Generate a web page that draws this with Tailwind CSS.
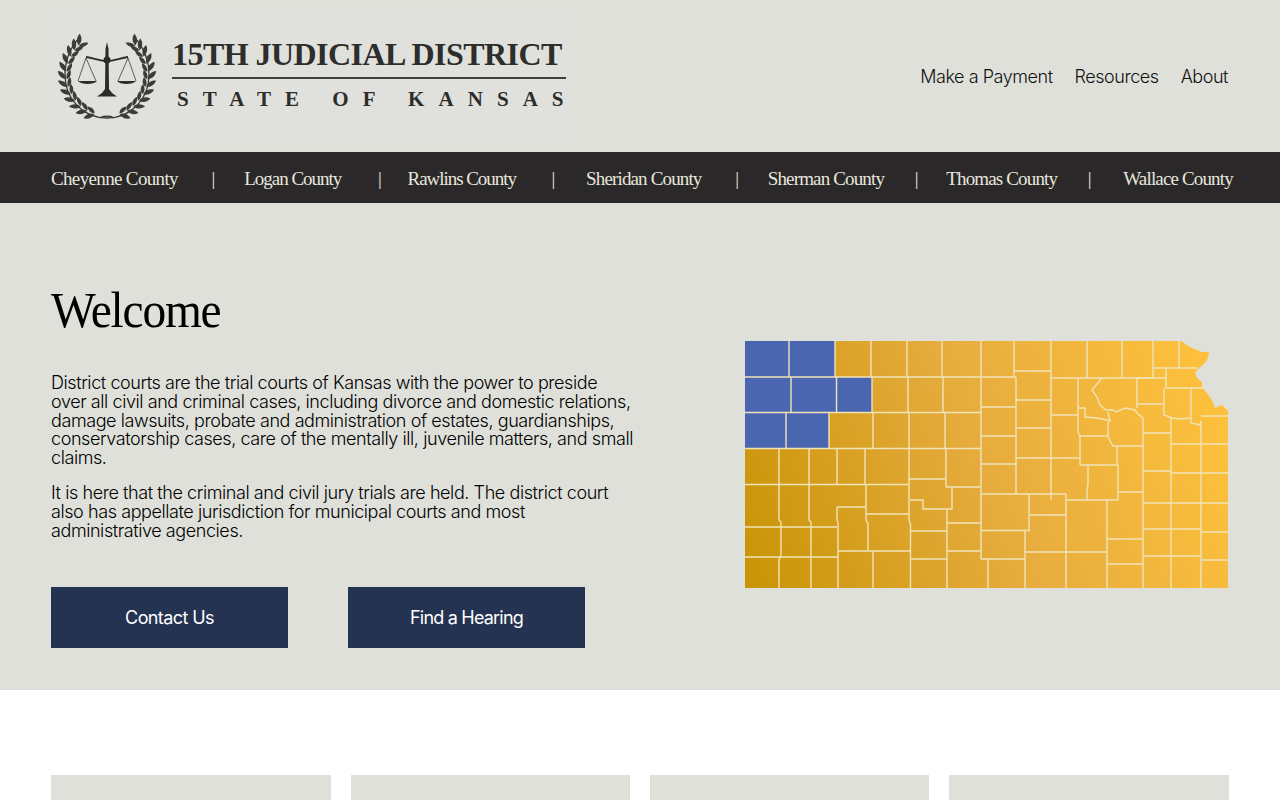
<!DOCTYPE html>
<html lang="en"><head><meta charset="utf-8"><title>15th Judicial District</title>
<script src="https://cdn.jsdelivr.net/npm/@tailwindcss/browser@4"></script></head>
<body class="bg-white font-['Inter',sans-serif] text-black overflow-hidden">
<header class="h-[152px] bg-[#dfe0da] pl-[51px] pr-[52px] flex items-center justify-between">
  <a class="w-[520px] h-[130px] -mt-[2px] bg-[#e0e1dc] flex items-center relative shrink-0" href="#">
    <svg class="w-[520px] h-[130px] absolute left-0 top-0" viewBox="51 11 520 130" aria-hidden="true">
      <defs>
        <g id="lf" fill="#3c3c3a"><path d="M66 76 C61 75 58.500 71 58.500 67 C63 68 66 71 66 76Z"/><path d="M66.500 76 C70.500 75 72 71 71 67 C67.500 69 66 72 66.500 76Z"/></g>
        <g id="wr">
          <path d="M107 119 C83 119 65 100 65 76 C65 62 70 49 79 39" fill="none" stroke="#3c3c3a" stroke-width="1.300"/>
          <use href="#lf" transform="rotate(-72 107 76)"/><use href="#lf" transform="rotate(-61 107 76)"/><use href="#lf" transform="rotate(-50 107 76)"/><use href="#lf" transform="rotate(-39 107 76)"/><use href="#lf" transform="rotate(-28 107 76)"/><use href="#lf" transform="rotate(-17 107 76)"/><use href="#lf" transform="rotate(-6 107 76)"/><use href="#lf" transform="rotate(5 107 76)"/><use href="#lf" transform="rotate(16 107 76)"/><use href="#lf" transform="rotate(27 107 76)"/><use href="#lf" transform="rotate(37 107 76)"/><use href="#lf" transform="rotate(46 107 76)"/>
        </g>
      </defs>
      <use href="#wr"/><use href="#wr" transform="translate(214 0) scale(-1 1)"/>
      <path d="M105.500 50 L107 43 L108.500 50 L109 90 L112 94 L117 97.500 H97 L102 94 L105 90Z" fill="#2b2b29"/>
      <circle cx="107" cy="61" r="3.500" fill="#2b2b29"/>
      <path d="M86 58 C94 59 100 62 107 62 C114 62 120 59 128 58" fill="none" stroke="#2b2b29" stroke-width="1.800"/>
      <path d="M86 59 L78 82 M86 59 L96 82 M128 59 L118 82 M128 59 L136 82" stroke="#3c3c3a" stroke-width="0.800" fill="none"/>
      <path d="M78 82 H97 C94 86 81 86 78 82Z M117 82 H136 C133 86 120 86 117 82Z" fill="#2b2b29"/>
      <path d="M100 119 C103 117 105 117 107 117.500 C109 117 111 117 114 119" fill="none" stroke="#3c3c3a" stroke-width="1.300"/>
    </svg>
    <div class="ml-[121px] -mt-[4px] w-[395px] relative font-['Liberation_Serif',serif] font-bold text-[#2d2d2b]">
      <div class="text-[32px] leading-[36px] tracking-[-0.55px] whitespace-nowrap">15TH JUDICIAL DISTRICT</div>
      <div class="h-[2px] bg-[#3f3f3a] mt-[5px] w-[394px]"></div>
      <div class="text-[21px] leading-[24px] mt-[8px] pl-[5px] tracking-[14.05px] whitespace-nowrap">STATE OF KANSAS</div>
    </div>
  </a>
  <nav class="flex gap-[22px] text-[18px] font-light tracking-[-0.45px] text-[#111]">
    <a href="#">Make a Payment</a><a href="#">Resources</a><a href="#">About</a>
  </nav>
</header>
<nav class="h-[51px] bg-[#2b2829] pl-[51px] pr-[47px] pt-[3px] flex items-center justify-between font-['Liberation_Serif',serif] text-[19px] tracking-[-0.85px] text-[#e6e6dc]">
  <a href="#" class="tracking-[-0.65px]">Cheyenne County</a><span class="translate-x-[2px]">|</span><a href="#" class="tracking-[-1px]">Logan County</a><span class="translate-x-[5px]">|</span><a href="#" class="tracking-[-1.05px]">Rawlins County</a><span class="translate-x-[4px]">|</span><a href="#" class="ml-[4px]">Sheridan County</a><span class="translate-x-[2px]">|</span><a href="#">Sherman County</a><span class="-ml-[3px] translate-x-[2px]">|</span><a href="#" class="-ml-[1px]">Thomas County</a><span class="-translate-x-[1px]">|</span><a href="#">Wallace County</a>
</nav>
<main class="h-[487px] bg-[#dfe0da] px-[51px] flex justify-between">
  <section class="w-[590px] pt-[77px]">
    <h1 class="font-['Liberation_Serif',serif] text-[51px] leading-[60px] tracking-[-1.3px] origin-left scale-x-[0.93]">Welcome</h1>
    <p class="mt-[34px] w-[585px] text-[18px] leading-[18.8px] font-[320] tracking-[-0.42px]">District courts are the trial courts of Kansas with the power to preside over all civil and criminal cases, including divorce and domestic relations, damage lawsuits, probate and administration of estates, guardianships, conservatorship cases, care of the mentally ill, juvenile matters, and small claims.</p>
    <p class="mt-[16px] w-[585px] text-[18px] leading-[18.8px] font-[320] tracking-[-0.42px]">It is here that the criminal and civil jury trials are held. The district court also has appellate jurisdiction for municipal courts and most administrative agencies.</p>
    <div class="mt-[47px] flex gap-[60px]">
      <a href="#" class="w-[237px] h-[61px] bg-[#243352] text-white text-[18px] tracking-[-0.6px] flex items-center justify-center">Contact Us</a>
      <a href="#" class="w-[237px] h-[61px] bg-[#243352] text-white text-[18px] tracking-[-0.8px] flex items-center justify-center">Find a Hearing</a>
    </div>
  </section>
  <div class="pt-[138px]">
    <svg class="w-[484px] h-[247px] block" viewBox="745 341 484 247" role="img" aria-label="Map of Kansas counties">
      <defs>
        <linearGradient id="g" x1="745" y1="560" x2="1229" y2="380" gradientUnits="userSpaceOnUse"><stop offset="0" stop-color="#c99507"/><stop offset="0.5" stop-color="#e6ac3e"/><stop offset="1" stop-color="#ffc23c"/></linearGradient>
      </defs>
      <path d="M745 341H1181L1190 347L1202 352L1209 352L1208 358L1205 363L1198 369L1195 373L1197 378L1202 382V387L1207 393L1213 402L1215 408L1222 405L1228 411V588H745Z" fill="url(#g)"/>
      <path d="M745 341H835V377H872V412H829V448H745Z" fill="#4a66b0"/>
      <g fill="none" stroke="#f1e3b8" stroke-width="1.400">
        <path d="M789 341V377M835 341V377M871 341V377M907 341V377M942 341V377M981 341V559M1014 341V377M1051 341V371M1087 341V378M1122 341V378M1153 341V378M1179 341V368"/>
        <path d="M745 377H1016M745 412.500H981M745 448.500H981"/>
        <path d="M791 377V412M836.500 377V412M872 377V412M908 377V412M943 377V412M786 412V448M829 412V448M873 412V448M909 412V448M945 412V448"/>
        <path d="M779 449V520L781 522V557L779 559V588M809 449V520L811 522V588M837 449V484M865 449V484M745 484.500H909M745 527H837M745 557H838M837 507V520L838 523V588M837 507H866M866 484V520L868 524V551M838 551H910M866 514H909M873 551V588M909 449V520L910.500 524V588"/>
        <path d="M909 479H946M946 449V487M910 500H923V509H952V487M946 487H981M947 509V588M910 531H947M910 559H947M947 523H981M947 551H981"/>
        <path d="M1016 377V494M981 407H1016M981 436H1016M981 464H1016M981 494H1029V530.500M981 530.500H1030M1025 530.500V588M981 559H1025M988 559V588M1030 515H1066M1030 494H1066M1066 494V588M1025 552H1107M1107 500V588M1066 500H1118"/>
        <path d="M1014 371H1051M1016 400H1051M1016 428H1051M1016 458H1051M1051 371V500M1051 378H1153M1153 368H1197M1166 368V388M1166 388H1205M1078 378V408M1051 415H1078M1078 408H1085V417L1097 418L1107 420L1110 421L1108 412M1078 408V432L1080 436V465M1051 458H1080M1080 436H1108V422M1108 437L1113 446H1117V465M1080 465H1118V500M1088 465V485L1087 490V500M1117 446H1143M1143 418V588"/>
        <path d="M1102 378L1092 390L1097 397L1100 405L1106 410L1113 410L1116 412L1125 408L1135 410L1138 414L1143 418M1137 378V408M1137 404H1164M1137 378H1166M1164 388V415L1172 418L1180 419L1191 418V388M1191 418V423L1200 425L1201 421V588M1201 416H1228M1143 433H1171M1171 417V588M1171 444H1228M1171 473H1228M1143 471H1171M1143 503H1228M1118 492H1143M1143 529H1201M1201 532H1228M1143 556H1201M1201 560H1228M1107 539H1143M1107 564H1143"/>
      </g>
    </svg>
  </div>
</main>
<section class="bg-white px-[51px] pt-[85px] grid grid-cols-[280px_279px_279px_280px] gap-[20px]">
  <div class="h-[200px] bg-[#dfe0da]"></div><div class="h-[200px] bg-[#dfe0da]"></div><div class="h-[200px] bg-[#dfe0da]"></div><div class="h-[200px] bg-[#dfe0da]"></div>
</section>
</body></html>
